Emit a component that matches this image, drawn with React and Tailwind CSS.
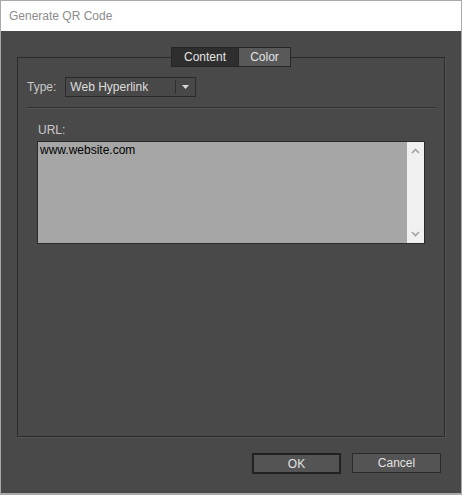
import React, { useState } from 'react';

const font = { fontFamily: '"Liberation Sans", Arial, sans-serif' };

const Chevron = ({ up }) => (
  <svg width="9" height="6" viewBox="0 0 9 6" className="block">
    <path
      d={up ? 'M1 5 L4.5 1.5 L8 5' : 'M1 1 L4.5 4.5 L8 1'}
      fill="none"
      stroke="#a3a3a3"
      strokeWidth="1.6"
    />
  </svg>
);

const Tabs = ({ tab, setTab }) => (
  <div className="absolute left-1/2 -translate-x-1/2 top-[-11px] flex border border-[#262626] bg-[#2e2e2e]">
    {['Content', 'Color'].map((t) => (
      <button
        key={t}
        onClick={() => setTab(t)}
        className={`h-[18px] text-[12px] leading-[18px] text-[#e4e4e4] ${
          tab === t ? 'bg-[#2e2e2e] w-[66px]' : 'bg-[#595959] w-[52px] border-l border-[#262626]'
        }`}
      >
        {t}
      </button>
    ))}
  </div>
);

const App = () => {
  const [tab, setTab] = useState('Content');
  const [url, setUrl] = useState('www.website.com');

  return (
    <div className="w-[462px] h-[495px] flex flex-col border-t border-x border-b-2 border-[#a9a9a9] bg-[#494949]" style={font}>
      <div className="h-[30px] bg-white flex items-center pl-[8px] text-[12px] text-[#8c8c8c]">
        Generate QR Code
      </div>

      <div className="flex-1 flex flex-col px-[16px] pt-[26px]">
        <div className="relative h-[380px] w-[428px] border border-[#2b2b2b] shadow-[1px_1px_0_#565656]">
          <Tabs tab={tab} setTab={setTab} />

          <div className="flex items-center pl-[9px] mt-[19px] h-[20px]">
            <span className="text-[12px] text-[#c9c9c9] mr-[9px]">Type:</span>
            <div className="w-[131px] h-[20px] flex items-center border border-[#2a2a2a] bg-[#484848]">
              <span className="flex-1 pl-[4px] text-[12px] text-[#dedede]">Web Hyperlink</span>
              <span className="w-px h-[14px] bg-[#2e2e2e]" />
              <span className="w-[19px] flex justify-center">
                <svg width="7" height="4" viewBox="0 0 7 4">
                  <path d="M0 0 H7 L3.5 4 Z" fill="#d8d8d8" />
                </svg>
              </span>
            </div>
          </div>

          <div className="mt-[10px] ml-[9px] mr-[8px] h-px bg-[#333333] shadow-[0_1px_0_#555555]" />

          <div className="pl-[20px] mt-[15px] text-[12px] text-[#c9c9c9] leading-[14px]">URL:</div>

          <div className="ml-[19px] mt-[4px] w-[388px] h-[103px] flex border border-[#2a2a2a] bg-[#a6a6a6]">
            <textarea
              value={url}
              onChange={(e) => setUrl(e.target.value)}
              className="flex-1 resize-none bg-transparent outline-none pl-[2px] pt-[1px] text-[12px] leading-[14px] text-black"
              style={font}
            />
            <div className="w-[17px] bg-[#f0f0f0] flex flex-col items-center justify-between py-[6px]">
              <Chevron up />
              <Chevron />
            </div>
          </div>
        </div>

        <div className="flex justify-end gap-[11px] mt-[16px] pr-[4px]">
          <button className="w-[89px] h-[21px] border-2 border-[#222222] bg-[#545454] text-[12px] text-[#e2e2e2]">
            OK
          </button>
          <button className="w-[89px] h-[20px] border border-[#2a2a2a] bg-[#545454] text-[12px] text-[#e2e2e2]">
            Cancel
          </button>
        </div>
      </div>
    </div>
  );
};

export default App;
